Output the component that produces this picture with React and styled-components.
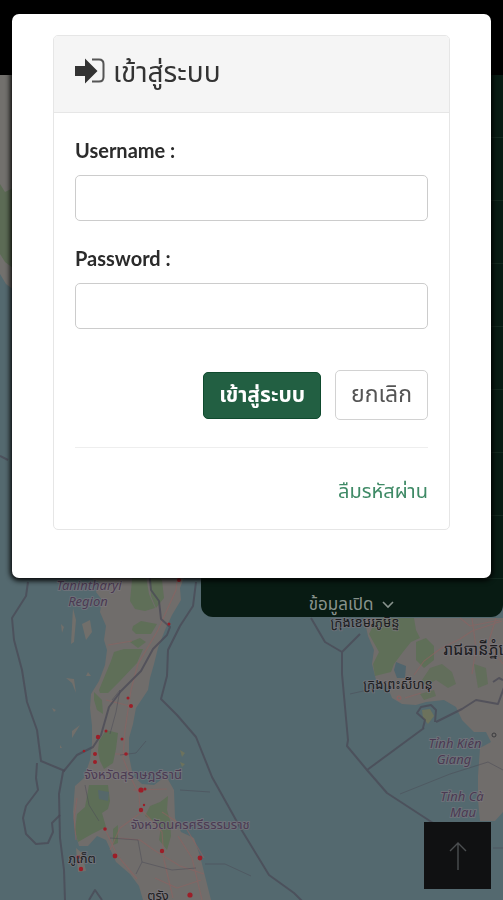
import React, { useState, useCallback } from 'react';
import styled, { createGlobalStyle, ThemeProvider } from 'styled-components';

const theme = {
    primary: '#225f42',
    primaryBorder: '#0f4a2e',
    link: '#3f8a66',
    line: '#e6e6e6',
    drawer: '#081b13',
    font: '"Lato", "Noto Sans Thai", "Noto Sans", "Liberation Sans", sans-serif',
    mapFont: '"Noto Sans", "Noto Sans Thai", "Noto Sans Khmer", sans-serif',
};

const GlobalStyle = createGlobalStyle`
    *{ box-sizing:border-box; }
    body{
        margin:0;
        background-color:#566a71;
        font-family:${theme.font};
    }
    h2, ul{
        margin:0;padding:0;
    }
`;

const Page = styled.div`
    position:relative;
    min-height:100vh;
    overflow:hidden;
`;

const Header = styled.header`
    height:75px;
    background-color:#000;
`;

const MapBox = styled.svg`
    position:absolute;
    top:0;left:0;
    width:100%;height:100%;
    z-index:-1;
    font-family:${props => props.theme.mapFont};
    .border{
        fill:none;
        stroke:#4a4a56;
        stroke-width:2;
        stroke-linejoin:round;
        opacity:.75;
        &.minor{
            stroke-width:1;
            opacity:.5;
        }
    }
    .road{
        fill:none;
        stroke:#8d6361;
        stroke-width:1.2;
        stroke-linejoin:round;
        opacity:.6;
    }
    .label{
        font-size:13px;
        text-anchor:middle;
        fill:#4b3a52;
        stroke:#7d7880;
        stroke-width:2;
        stroke-opacity:.6;
        paint-order:stroke;
        &.region{ font-style:italic; }
        &.city{ fill:#1d1d1f; }
        &.large{ font-size:16px; }
    }
`;

const Drawer = styled.nav`
    margin-left:40%;
    border-radius:0 0 12px 12px;
    background-color:${props => props.theme.drawer};
    ul{ list-style:none; }
`;

const DrawerRow = styled.li`
    height:63px;
    border-bottom:1px solid #14291f;
`;

const DrawerButton = styled.button`
    display:flex;
    align-items:flex-end;
    justify-content:center;
    gap:8px;
    width:100%;height:38px;
    padding:0 0 2px;
    border:0;
    background:none;
    color:#88938d;
    font-family:inherit;
    font-size:17px;
    line-height:22px;
    svg{
        width:14px;height:22px;
    }
`;

const ScrollTopButton = styled.button`
    position:fixed;
    right:12px;bottom:11px;
    display:flex;
    align-items:center;
    justify-content:center;
    width:67px;height:67px;
    padding:0;
    border:0;
    background-color:#101112;
`;

const Overlay = styled.div`
    position:absolute;
    inset:0;
    padding:14px 12px;
`;

const Dialog = styled.div`
    padding:21px 41px 48px;
    border-radius:7px;
    background-color:#fff;
    box-shadow:0 1px 5px 2px rgba(0,0,0,.9);
`;

const Card = styled.section`
    border:1px solid ${props => props.theme.line};
    border-radius:5px;
`;

const CardHeader = styled.div`
    display:flex;
    align-items:center;
    gap:8px;
    height:77px;
    padding:0 21px 6px;
    border-bottom:1px solid ${props => props.theme.line};
    border-radius:4px 4px 0 0;
    background-color:#f5f5f5;
    color:#333;
    h2{
        font-size:28px;
        font-weight:400;
        line-height:40px;
    }
`;

const Form = styled.form`
    padding:21px 21px 23px;
`;

const Field = styled.div`
    margin-bottom:21px;
    label{
        display:block;
        margin-bottom:9px;
        color:#2b2b2b;
        font-size:20px;
        font-weight:700;
        line-height:32px;
    }
    input{
        display:block;
        width:100%;height:46px;
        padding:6px 14px;
        border:1px solid #ccc;
        border-radius:5px;
        background-color:#fff;
        font-family:inherit;
        font-size:20px;
    }
`;

const ButtonBox = styled.div`
    display:flex;
    align-items:center;
    justify-content:flex-end;
    gap:14px;
    padding:20px 0 27px;
    border-bottom:1px solid #eee;
`;

const Button = styled.button`
    height:${props => props.$primary ? 47 : 50}px;
    padding:0 15px;
    border:1px solid ${props => props.$primary ? props.theme.primaryBorder : '#d2d2d2'};
    border-radius:5px;
    background-color:${props => props.$primary ? props.theme.primary : '#fff'};
    color:${props => props.$primary ? '#fff' : '#555'};
    font-family:inherit;
    font-size:${props => props.$primary ? 21 : 23}px;
    font-weight:${props => props.$primary ? 700 : 400};
`;

const LinkBox = styled.div`
    padding-top:26px;
    text-align:right;
    a{
        color:${props => props.theme.link};
        font-size:20px;
        line-height:32px;
        text-decoration:none;
    }
`;

const SignInIcon = () => (
    <svg width="30" height="28" viewBox="0 0 30 28" aria-hidden="true">
        <path d="M0 9h10V1.500l12.500 12.500L10 26.500V19H0z" fill="#333" />
        <path d="M17 2.500h7q4.500 0 4.500 4.500v13q0 4.500-4.500 4.500h-7" fill="none" stroke="#555" strokeWidth="2" />
    </svg>
);

const cityDots = [
    [179, 580, 2], [169, 624, 1.5], [128, 698, 1.5], [131, 706, 2], [98, 737, 2.2], [106, 731, 1.5],
    [122, 739, 1.5], [95, 754, 2], [84, 751, 1.3], [95, 762, 2], [126, 754, 1.8], [141, 790, 2.6],
    [145, 789, 1.5], [141, 810, 2.2], [144, 805, 1.2], [105, 829, 1.8], [115, 856, 2.4],
    [162, 851, 2.2], [200, 858, 2.4], [190, 895, 2.6], [78, 857, 2], [81, 869, 2.2], [79, 862, 1.6],
];

const SeaMap = () => (
    <MapBox viewBox="0 0 503 900" preserveAspectRatio="xMidYMin slice" aria-hidden="true">
        <rect width="503" height="900" fill="#54696f" />

        {/* Andaman coast */}
        <path d="M0 75h14v215l-8-6-6-10z" fill="#72706d" />
        <path d="M0 184l5 8 8-4v80l-8-6-5-8z" fill="#5c6b55" />
        <path d="M64 570L187 570 180 588 181 600 172 615 165 630 158 648 154 664 150 678 148 690 136 708 133 724 129 738 129 756 133 776 142 784 154 785 166 776 174 790 175 818 181 832 194 838 200 856 205 876 211 900 143 900 139 886 130 874 116 862 106 840 97 836 88 846 79 846 75 832 73 812 75 786 84 778 90 760 92 744 92 726 90 708 91 694 99 681 105 665 107 650 104 640 106 626 100 612 102 600 96 592 100 582z" fill="#706d6b" />
        <path d="M133 570l12 0 4 24 6 14-10 3-10-2-5-8zM150 572l12 8 2 18-8 10-5-12z" fill="#5f6f58" />
        <path d="M133 626l8-5 16 3-6 10-15 0-4-4z" fill="#5f6f58" />
        <path d="M114 652l10-3 19 0-6 14-17 18-12 12-8 0-1-3 7-17 5-12z" fill="#5f6f58" />
        <path d="M130 642l10-4 6 4-8 6z" fill="#5f6f58" />
        <path d="M94 692l8 8 1 14-6-4-3-10z" fill="#5f6f58" />
        <path d="M106 730l12 3-2 16-3 14-9 6-4-8-2-10 1-10z" fill="#5d6e57" />
        <path d="M89 785l19 0 2 16-2 8-6 4 4 14-14 7-14 8-3-12 2-16 8-7z" fill="#5d6e57" />
        <path d="M168 796l-8 6-10 4-5 10 10 6 6 4-2 14 8 10 4-14-1-16-3-10z" fill="#5f6f58" />
        <path d="M113 829l5-4 0 18-5 2z" fill="#5f6f58" />
        <path d="M73 608l3 12-2 22-3 2 1-18zM82 624l8-4 2 12-6 8zM61 624l3 3-2 6zM88 672l3 4-5 0zM66 678l8 1 2 14-4-10zM52 708l4 2-2 2zM72 731l8-6-8 13zM60 745l2 3-2 0zM76 848l6 5 4 18-8 1z" fill="#716f6b" />
        <path d="M180 750l5 3-3 4zM180 762l5 2-3 3z" fill="#6c725d" />
        <path d="M98 790l11 2-1 9-9-2z" fill="#56686a" />

        {/* Gulf coast */}
        <path d="M364 618L503 618 503 812 495 821 480 821 478 800 478 776 480 748 491 742 486 732 474 732 462 720 456 707 444 700 426 702 416 705 402 704 392 698 388 688 376 680 372 664 374 650 368 636z" fill="#706d6b" />
        <path d="M376 618l38 0 2 12 4 8 -9 4-8 10-9 12-3 8-16 4-2-12 6-12-10-18 4-8z" fill="#5f6f58" />
        <path d="M416 642l10-4 8 8 0 14-10 8-8-8z" fill="#5f6f58" />
        <path d="M396 662l10 4-1 12-8 0-3-8z" fill="#50656d" />
        <path d="M430 668l12-4 10 8 4 12-8 4-12-8-10 6-4-6z" fill="#626e5b" />
        <path d="M474 664l12 4 2 16-10 4z" fill="#626e5b" />
        <path d="M420 694l14-4 2 6-12 4z" fill="#626e5b" />
        <path d="M422 710l8-1 4 7-6 8-5-6z" fill="#6c725c" />

        <path className="road" d="M178 572l-2 18-18 40-20 34-7 26-6 40-2 28 8 20 8 16 1 14 22 24 2 28 9 38" />
        <path className="road" d="M108 645l24-4M106 700l24 6M115 754l14 0M133 790l34-1M142 812l-22 16-10 22M162 812l24 16 18 30M105 829l12 26 20 24M155 878l22 10 24-8M120 838l20 2 14 10 26 16 24 8M178 836l14 22 10 42M76 840l-2-22 3-20" />
        <path className="road" d="M414 675l10-14 16-12 20-10 12-8 30-10M472 618l4 30-4 26M460 618l10 8 30-6M496 618l-8 26 15 20M405 698l16-5" />

        <path className="border" d="M28 582l-2 14-14 22 2 22 8 30 5 32 10 28 4 31 24 10" />
        <path className="border" d="M37 763l-1 15 2 12-12 16-3 12 3 16 10 10 12-1 5-11-1-9 8-8" />
        <path className="border" d="M65 900l-1-30-4-32-1-44 4-22 14-17 16-8 8-12 8-28 12-16 20-20 12-22 14-14 3-8-9-8-2-18-8-11-2-20" />
        <path className="border" d="M89 900l6-10 7 10" />
        <path className="border" d="M196 582l-3 24-13 20-12 24-1 26-6 23 16 16 19 22 16 40 29 52 28 46 25 18 18 18" />
        <path className="border" d="M311 618l14 24 17 10 18-18M342 652l0 22 6 66-1 6 20 24 20 23 46 30M367 770l57-42 M436 722l26-13 14-9 22 4 8-22M493 682l6-4 4 2" />
        <path className="border" d="M423 728l2-8-8-7 4-6 10-2 5 5-1 12" />
        <path className="border" d="M0 456l8 4" />
        <path className="border minor" d="M350 694l22-5M400 794l50-20 38-12 15 8M493 848h10M180 790l30 2M205 864l20 0 26 12M120 755l16-2 10-12M110 838l28 2 4 22 30 8 24-2M142 862l-6 12M85 785l4 20 10 16M112 700l8-10-4 22-6 22" />

        {cityDots.map(([x, y, r]) => (
            <circle key={`${x}-${y}`} cx={x} cy={y} r={r} fill="#9c1e28" />
        ))}
        <circle cx="399" cy="698" r="2" fill="none" stroke="#92605f" />
        <circle cx="494" cy="735" r="2" fill="none" stroke="#3b3b3e" />

        <text className="label region" x="89" y="590">Tanintharyi</text>
        <text className="label region" x="88" y="606">Region</text>
        <text className="label" x="133" y="779">จังหวัดสุราษฎร์ธานี</text>
        <text className="label" x="190" y="829">จังหวัดนครศรีธรรมราช</text>
        <text className="label city" x="82" y="863">ภูเก็ต</text>
        <text className="label city" x="158" y="900">ตรัง</text>
        <text className="label city" x="365" y="627">ក្រុងខេមរភូមិន្ទ</text>
        <text className="label city" x="398" y="689">ក្រុងព្រះសីហនុ</text>
        <text className="label city large" x="486" y="655">រាជធានីភ្នំពេញ</text>
        <text className="label region" x="455" y="748">Tỉnh Kiên</text>
        <text className="label region" x="454" y="764">Giang</text>
        <text className="label region" x="462" y="801">Tỉnh Cà</text>
        <text className="label region" x="463" y="817">Mau</text>
    </MapBox>
);

const LoginCard = () => {
    const [username, setUsername] = useState('');
    const [password, setPassword] = useState('');

    const onChangeUsername = useCallback((evt) => {
        setUsername(evt.currentTarget.value);
    }, []);

    const onChangePassword = useCallback((evt) => {
        setPassword(evt.currentTarget.value);
    }, []);

    const onSubmit = useCallback((evt) => {
        evt.preventDefault();
    }, []);

    return (
        <Card>
            <CardHeader>
                <SignInIcon />
                <h2>เข้าสู่ระบบ</h2>
            </CardHeader>
            <Form onSubmit={onSubmit}>
                <Field>
                    <label htmlFor="username">Username :</label>
                    <input id="username" type="text" value={username} onChange={onChangeUsername} />
                </Field>
                <Field>
                    <label htmlFor="password">Password :</label>
                    <input id="password" type="password" value={password} onChange={onChangePassword} />
                </Field>
                <ButtonBox>
                    <Button type="submit" $primary>เข้าสู่ระบบ</Button>
                    <Button type="button">ยกเลิก</Button>
                </ButtonBox>
                <LinkBox>
                    <a href="#forgot">ลืมรหัสผ่าน</a>
                </LinkBox>
            </Form>
        </Card>
    );
};

const App = () => (
    <ThemeProvider theme={theme}>
        <GlobalStyle />
        <Page>
            <SeaMap />
            <Header />
            <Drawer>
                <ul>
                    {Array.from({ length: 8 }, (_, i) => <DrawerRow key={i} />)}
                </ul>
                <DrawerButton type="button">
                    ข้อมูลเปิด
                    <svg viewBox="0 0 14 22" aria-hidden="true">
                        <path d="M2 9l5 5 5-5" fill="none" stroke="currentColor" strokeWidth="1.6" />
                    </svg>
                </DrawerButton>
            </Drawer>
            <ScrollTopButton type="button" aria-label="Scroll to top">
                <svg width="20" height="30" viewBox="0 0 20 30">
                    <path d="M10 29V2M2 10l8-8 8 8" fill="none" stroke="#4b4e50" strokeWidth="1.4" />
                </svg>
            </ScrollTopButton>
            <Overlay>
                <Dialog role="dialog" aria-modal="true">
                    <LoginCard />
                </Dialog>
            </Overlay>
        </Page>
    </ThemeProvider>
);

export default App;
